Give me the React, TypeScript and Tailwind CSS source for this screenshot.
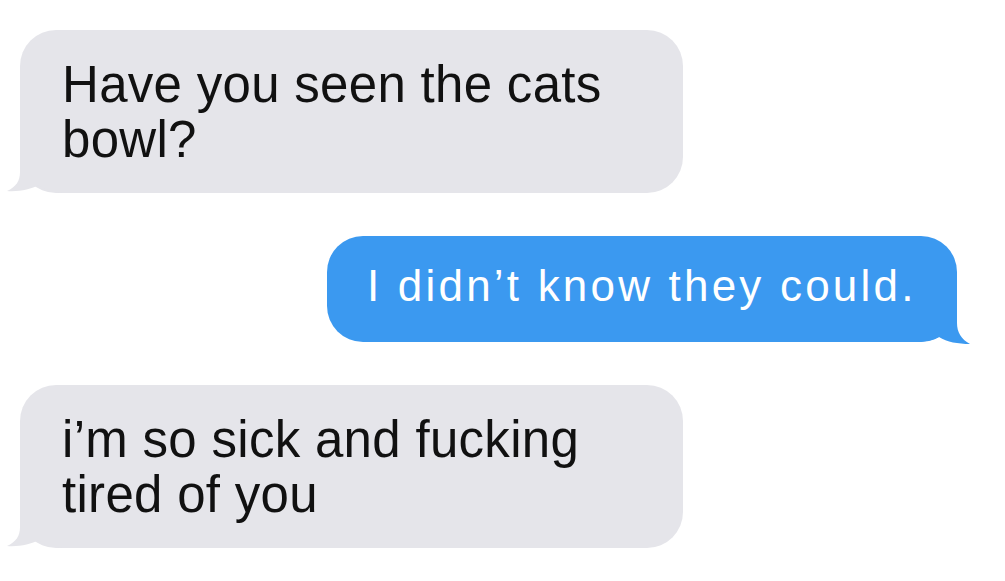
import React from 'react';

const GrayTail: React.FC = () => (
  <svg className="absolute left-[-14px] bottom-0" width="60" height="45" viewBox="0 0 60 45">
    <path d="M14 0 L14 24 C14 33 10 39 1 43 C13 44 25 41 33 37 C40 42 48 45 60 45 L60 0 Z" fill="#e5e5ea" />
  </svg>
);

const BlueTail: React.FC = () => (
  <svg className="absolute right-[-14px] bottom-[-2px]" width="58" height="45" viewBox="0 0 58 45">
    <path d="M44 0 L44 24 C44 33 48 40 57 45 C45 45 34 43 26 38 C20 41 12 43 0 43 L0 0 Z" fill="#3b99f0" />
  </svg>
);

const Incoming: React.FC<{ lines: string[] }> = ({ lines }) => (
  <div className="relative self-start w-[663px] h-[163px] rounded-[36px] bg-[#e5e5ea] pl-[42px] pt-[27px]">
    <GrayTail />
    <p className="relative text-[51px] leading-[55px] tracking-[0.3px] text-[#111]">
      {lines[0]}
      <br />
      {lines[1]}
    </p>
  </div>
);

export default function App() {
  return (
    <div className="w-[1005px] h-[581px] bg-white overflow-hidden font-['Liberation_Sans',Arial,sans-serif]">
      <div className="flex flex-col gap-[43px] pt-[30px] pl-[20px] pr-[48px]">
        <Incoming lines={['Have you seen the cats', 'bowl?']} />

        {/* outgoing */}
        <div className="relative self-end w-[630px] h-[106px] rounded-[36px] bg-[#3b99f0] pl-[40px] pt-[22px]">
          <BlueTail />
          <p className="relative text-[44px] leading-[56px] tracking-[3.2px] text-white whitespace-nowrap">
            I didn’t know they could.
          </p>
        </div>

        <Incoming lines={['i’m so sick and fucking', 'tired of you']} />
      </div>
    </div>
  );
}
